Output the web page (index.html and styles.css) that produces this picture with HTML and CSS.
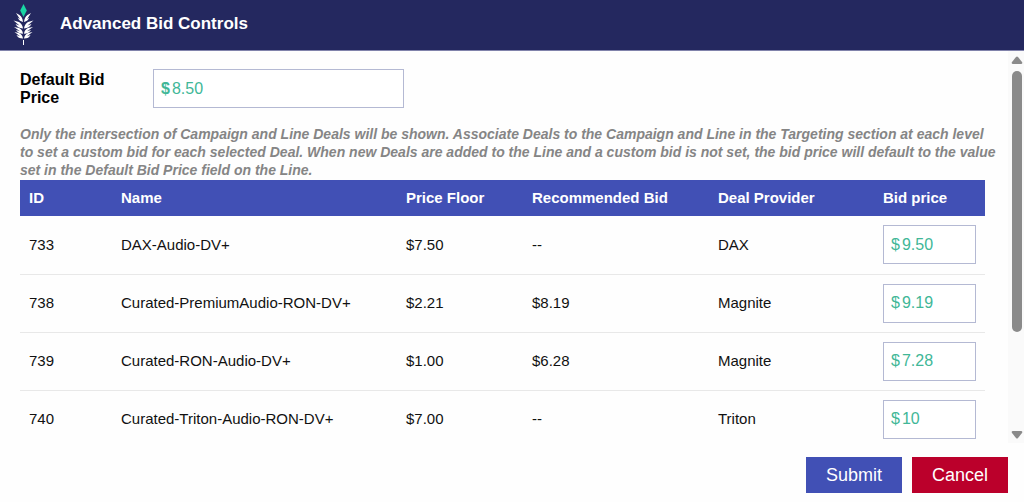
FILE: index.html
```html
<!DOCTYPE html>
<html lang="en">
<head>
<meta charset="utf-8">
<meta name="viewport" content="width=device-width, initial-scale=1">
<title>Advanced Bid Controls</title>
<link rel="stylesheet" href="styles.css">
</head>
<body>
<form class="dialog">
  <header class="dialog-header">
    <svg class="logo" viewBox="0 0 22 42" aria-hidden="true">
      <path fill="#18d6a3" d="M10.5 0L13.8 6.5L10.5 13L7.2 6.5Z"/>
      <g fill="#fff">
        <path d="M3 9L6.5 11Q9.5 13 10 18Q6 17 4.6 13.5L7 15.2ZM18 9L14.5 11Q11.500 13 11 18Q15 17 16.400 13.5L14 15.2Z"/>
        <path d="M.5 16.500L6 18Q9.500 20 10 24.500Q4.500 24 2.500 20L6.500 21.500ZM20.500 16.500L15 18Q11.500 20 11 24.500Q16.500 24 18.500 20L14.500 21.500Z"/>
        <path d="M1 23L6 24Q9.500 25.500 10 29.800Q5 29.500 3 26L7 27.300ZM20 23L15 24Q11.500 25.500 11 29.800Q16 29.500 18 26L14 27.300Z"/>
        <path d="M1.500 28L6 29Q9.500 30.500 10 34.500Q5 34.500 3.500 31L7 32.200ZM19.500 28L15 29Q11.500 30.500 11 34.500Q16 34.500 17.500 31L14 32.200Z"/>
        <path d="M10 36h1v5h-1z"/>
      </g>
    </svg>
    <h1 class="dialog-title">Advanced Bid Controls</h1>
  </header>
  <div class="dialog-body">
    <main class="content">
      <div class="default-bid">
        <label class="default-label" for="default-bid">Default Bid Price</label>
        <div class="price-box price-box-wide"><b class="currency">$</b><input class="price-input" id="default-bid" type="text" value="8.50"></div>
      </div>
      <p class="note">Only the intersection of Campaign and Line Deals will be shown. Associate Deals to the Campaign and Line in the Targeting section at each level to set a custom bid for each selected Deal. When new Deals are added to the Line and a custom bid is not set, the bid price will default to the value set in the Default Bid Price field on the Line.</p>
      <table class="deals">
        <colgroup><col class="col-id"><col><col class="col-floor"><col class="col-rec"><col class="col-provider"><col class="col-bid"></colgroup>
        <thead>
          <tr><th>ID</th><th>Name</th><th>Price Floor</th><th>Recommended Bid</th><th>Deal Provider</th><th>Bid price</th></tr>
        </thead>
        <tbody>
          <tr><td>733</td><td>DAX-Audio-DV+</td><td>$7.50</td><td>--</td><td>DAX</td><td><div class="price-box"><span class="currency">$</span><input class="price-input" type="text" aria-label="Bid price for deal 733" value="9.50"></div></td></tr>
          <tr><td>738</td><td>Curated-PremiumAudio-RON-DV+</td><td>$2.21</td><td>$8.19</td><td>Magnite</td><td><div class="price-box"><span class="currency">$</span><input class="price-input" type="text" aria-label="Bid price for deal 738" value="9.19"></div></td></tr>
          <tr><td>739</td><td>Curated-RON-Audio-DV+</td><td>$1.00</td><td>$6.28</td><td>Magnite</td><td><div class="price-box"><span class="currency">$</span><input class="price-input" type="text" aria-label="Bid price for deal 739" value="7.28"></div></td></tr>
          <tr><td>740</td><td>Curated-Triton-Audio-RON-DV+</td><td>$7.00</td><td>--</td><td>Triton</td><td><div class="price-box"><span class="currency">$</span><input class="price-input" type="text" aria-label="Bid price for deal 740" value="10"></div></td></tr>
        </tbody>
      </table>
    </main>
    <div class="scrollbar" aria-hidden="true">
      <svg class="arrow" viewBox="0 0 12 8"><path d="M5 1Q6 0 7 1L11 6Q12 8 10 8H2Q0 8 1 6Z"/></svg>
      <div class="track"><div class="thumb"></div></div>
      <svg class="arrow" viewBox="0 0 12 8"><path d="M5 7Q6 8 7 7L11 2Q12 0 10 0H2Q0 0 1 2Z"/></svg>
    </div>
  </div>
  <footer class="actions">
    <button class="button button-submit" type="submit">Submit</button>
    <button class="button button-cancel" type="button">Cancel</button>
  </footer>
</form>
</body>
</html>
```
FILE: styles.css
```css
* {
  box-sizing: border-box;
}

body {
  margin: 0;
  background: #fefefe;
  color: #111;
  font: 16px/18px "Liberation Sans", Arial, sans-serif;
}

.dialog {
  display: flex;
  flex-direction: column;
  height: 100vh;
}

.dialog-header {
  display: flex;
  align-items: center;
  gap: 25px;
  padding: 4px 13px;
  background: #24285f;
  border-bottom: 1px solid #8183ab;
}

.logo {
  width: 22px;
  height: 42px;
}

.dialog-title {
  margin: 0 0 2px;
  color: #fff;
  font-size: 17px;
  line-height: 20px;
}

.dialog-body {
  display: flex;
  flex: 1;
  min-height: 0;
}

.content {
  flex: 1;
  min-width: 0;
  padding: 18px 23px 0 20px;
  overflow: hidden;
}

.default-bid {
  display: flex;
  align-items: center;
  gap: 33px;
}

.default-label {
  width: 100px;
  color: #000;
  font-weight: bold;
}

.price-box {
  display: flex;
  align-items: center;
  gap: 2px;
  height: 39px;
  padding: 0 7px;
  background: #fff;
  border: 1px solid #b4b9d3;
  color: #41b797;
  font-size: 16px;
}

.price-box-wide {
  flex: 0 1 251px;
}

.price-input {
  flex: 1;
  width: 100%;
  min-width: 0;
  padding: 0;
  border: 0;
  outline: 0;
  background: transparent;
  color: inherit;
  font: inherit;
}

.note {
  margin: 17px -14px 1px 0;
  color: #858585;
  font-size: 14px;
  font-style: italic;
  font-weight: bold;
}

.deals {
  width: 100%;
  table-layout: fixed;
  border-collapse: collapse;
  font-size: 15px;
}

.col-id { width: 92px; }
.col-floor { width: 126px; }
.col-rec { width: 186px; }
.col-provider { width: 165px; }
.col-bid { width: 111px; }

.deals th {
  height: 36px;
  padding: 0 9px;
  background: #4150b5;
  color: #fff;
  text-align: left;
}

.deals td {
  height: 58px;
  padding: 0 9px;
  border-bottom: 1px solid #e8e8e8;
}

.scrollbar {
  display: flex;
  flex-direction: column;
  align-items: center;
  gap: 7px;
  width: 16px;
  padding: 5px 0 4px 2px;
  background: #fafafa;
}

.arrow {
  width: 12px;
  height: 8px;
  fill: #8a8a8a;
}

.track {
  flex: 1;
  width: 10px;
}

.thumb {
  height: 74%;
  border-radius: 5px;
  background: #8a8a8a;
}

.actions {
  display: flex;
  justify-content: flex-end;
  gap: 10px;
  padding: 14px 16px 9px;
}

.button {
  min-width: 96px;
  height: 36px;
  padding: 0 18px;
  border: 0;
  color: #fff;
  font: 18px/20px "Liberation Sans", Arial, sans-serif;
}

.button-submit {
  background: #4150b5;
}

.button-cancel {
  background: #bb002b;
}
```
